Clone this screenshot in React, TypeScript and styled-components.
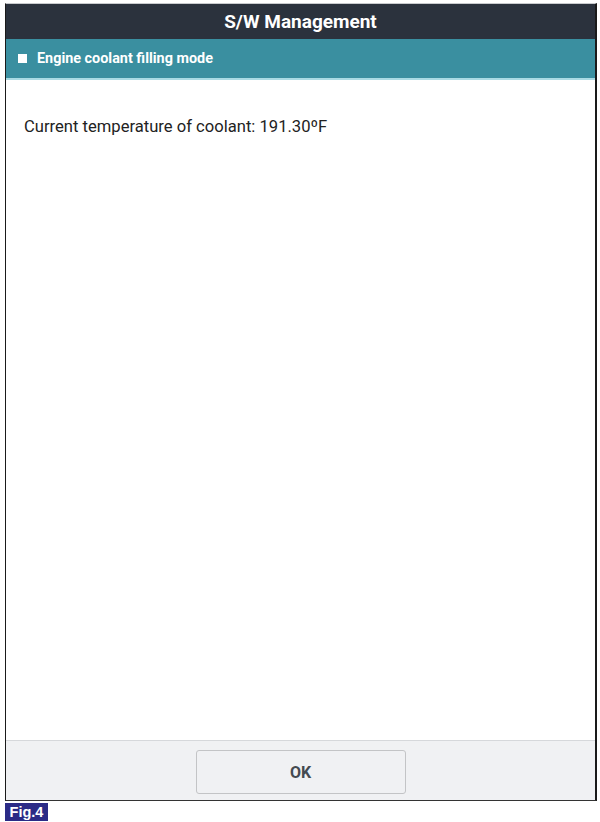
import React from 'react'
import styled, { createGlobalStyle } from 'styled-components'

const GlobalStyle = createGlobalStyle`
  html, body {
    margin: 0;
    padding: 0;
    background: #ffffff;
    font-family: Roboto, 'Liberation Sans', sans-serif;
  }
`

const Page = styled.div`
  width: 600px;
  height: 822px;
  padding: 3px 0 0 5px;
  box-sizing: border-box;
  display: flex;
  flex-direction: column;
`

const Frame = styled.div`
  width: 592px;
  height: 798px;
  box-sizing: border-box;
  display: flex;
  flex-direction: column;
  border-top: 1px solid #c9cbce;
  border-left: 1px solid #1a1a1a;
  border-right: 2px solid #1a1a1a;
  border-bottom: 1px solid #333333;
`

const TitleBar = styled.header`
  height: 35px;
  flex: none;
  background: #2b323d;
  color: #ffffff;
  display: flex;
  align-items: center;
  justify-content: center;
  font-size: 19px;
  font-weight: 700;
`

const SectionBar = styled.div`
  height: 39px;
  flex: none;
  background: #3a8fa0;
  border-bottom: 2px solid #a9dbe4;
  color: #ffffff;
  display: flex;
  align-items: center;
  gap: 10px;
  padding-left: 12px;
  font-size: 14.4px;
  font-weight: 700;
`

const Square = styled.span`
  width: 9px;
  height: 9px;
  background: #ffffff;
`

const Body = styled.main`
  flex: 1;
  padding: 37px 0 0 18px;
  font-size: 16.6px;
  color: #222222;
`

const Footer = styled.footer`
  height: 60px;
  flex: none;
  box-sizing: border-box;
  border-top: 1px solid #d6d8db;
  background: #f0f1f3;
  display: flex;
  align-items: center;
  justify-content: center;
`

const Button = styled.button`
  width: 210px;
  height: 44px;
  margin-top: 3px;
  background: #f0f1f3;
  border: 1px solid #c3c4c6;
  border-radius: 3px;
  font-family: Roboto, 'Liberation Sans', sans-serif;
  font-size: 16px;
  font-weight: 700;
  color: #444a50;
`

const FigLabel = styled.div`
  align-self: flex-start;
  margin-top: 2px;
  width: 43px;
  height: 18px;
  background: #2b2b86;
  color: #ffffff;
  font-family: 'Liberation Sans', Arial, sans-serif;
  font-size: 14.5px;
  font-weight: 700;
  display: flex;
  align-items: center;
  justify-content: center;
`

const App: React.FC = () => (
  <>
    <GlobalStyle />
    <Page>
      <Frame>
        <TitleBar>S/W Management</TitleBar>
        <SectionBar>
          <Square />
          Engine coolant filling mode
        </SectionBar>
        <Body>Current temperature of coolant: 191.30ºF</Body>
        <Footer>
          <Button>OK</Button>
        </Footer>
      </Frame>
      <FigLabel>Fig.4</FigLabel>
    </Page>
  </>
)

export default App
